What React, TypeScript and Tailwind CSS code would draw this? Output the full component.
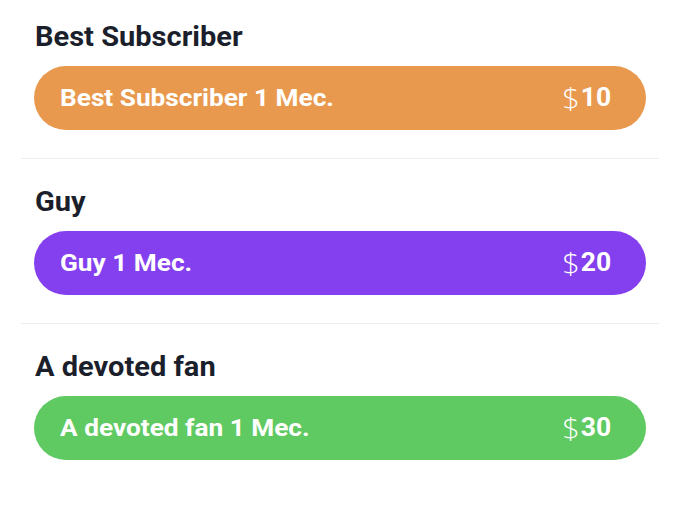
import React from 'react';

const plans = [
  { title: 'Best Subscriber', label: 'Best Subscriber 1 Mec.', price: 10, color: 'bg-[#e8994d]' },
  { title: 'Guy', label: 'Guy 1 Mec.', price: 20, color: 'bg-[#8440ee]' },
  { title: 'A devoted fan', label: 'A devoted fan 1 Mec.', price: 30, color: 'bg-[#5fc962]' },
];

const App = () => {
  return (
    <div className="min-h-[511px] bg-white px-[21px] pt-[21px] font-['Roboto',sans-serif]">
      {plans.map((plan, i) => (
        <div
          key={plan.title}
          className={`px-[13px] ${i > 0 ? 'pt-[27px]' : ''} ${i < plans.length - 1 ? 'pb-[28px] border-b border-[#eeeeee]' : ''}`}
        >
          {/* section title */}
          <h2 className="text-[27px] leading-[32px] font-bold text-[#1b1f2c] mb-[13px] pl-[1px]">
            <span className="inline-block origin-left scale-x-[1.075]">{plan.title}</span>
          </h2>

          {/* plan pill */}
          <div className={`${plan.color} h-[64px] rounded-full flex items-center justify-between pl-[26px] pr-[35px]`}>
            <span className="inline-block origin-left scale-x-[1.07] text-white text-[24.5px] font-bold">{plan.label}</span>
            <span className="inline-flex origin-right scale-x-[1.06] text-white text-[25px] items-center">
              <span className="font-['Open_Sans',sans-serif] font-light text-[29px] mr-[1px]">$</span>
              <span className="font-bold">{plan.price}</span>
            </span>
          </div>
        </div>
      ))}
    </div>
  );
};

export default App;
